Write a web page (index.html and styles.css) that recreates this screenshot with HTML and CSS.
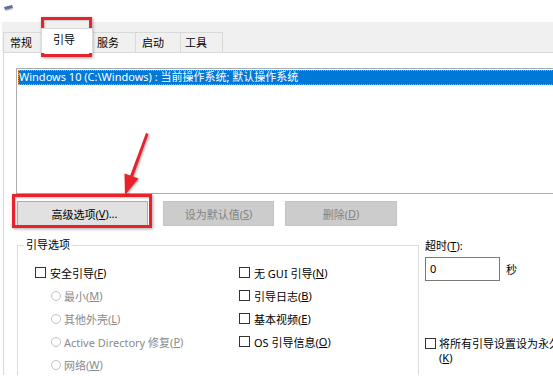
FILE: index.html
```html
<!DOCTYPE html>
<html lang="zh-CN">
<head>
<meta charset="utf-8">
<title>系统配置</title>
<link rel="stylesheet" href="styles.css">
</head>
<body>
<div class="titlebar">
  <svg class="app-icon" width="10" height="7" viewBox="0 0 10 7"><polygon points="0,2 8,0 9,3 1,5" fill="#5d7290"/><polygon points="1,5 9,3 9,4 2,6" fill="#a9b6c8"/></svg>
</div>
<div class="tabstrip">
  <div class="tab">常规</div>
  <div class="tab active">引导</div>
  <div class="tab">服务</div>
  <div class="tab">启动</div>
  <div class="tab">工具</div>
</div>
<div class="panel">
  <div class="listbox">
    <div class="item">Windows 10 (C:\Windows) : 当前操作系统; 默认操作系统</div>
  </div>
  <div class="buttons">
    <div class="btn btn-advanced">高级选项(<u>V</u>)...</div>
    <div class="btn btn-default disabled">设为默认值(<u>S</u>)</div>
    <div class="btn btn-delete disabled">删除(<u>D</u>)</div>
  </div>
  <div class="options">
    <fieldset class="group">
      <legend>引导选项</legend>
      <div class="group-body">
        <div class="col col-left">
          <div class="row"><span class="check"></span>安全引导(<u>F</u>)</div>
          <div class="row radio-row"><span class="radio"></span>最小(<u>M</u>)</div>
          <div class="row radio-row"><span class="radio"></span>其他外壳(<u>L</u>)</div>
          <div class="row radio-row"><span class="radio"></span>Active Directory 修复(<u>P</u>)</div>
          <div class="row radio-row"><span class="radio"></span>网络(<u>W</u>)</div>
        </div>
        <div class="col col-right">
          <div class="row"><span class="check"></span>无 GUI 引导(<u>N</u>)</div>
          <div class="row"><span class="check"></span>引导日志(<u>B</u>)</div>
          <div class="row"><span class="check"></span>基本视频(<u>E</u>)</div>
          <div class="row"><span class="check"></span>OS 引导信息(<u>O</u>)</div>
        </div>
      </div>
    </fieldset>
    <div class="timeout">
      <div class="timeout-label">超时(<u>T</u>):</div>
      <div class="timeout-field">
        <div class="input">0</div>
        <span class="unit">秒</span>
      </div>
      <div class="perm">
        <span class="check"></span>
        <span class="perm-text">将所有引导设置设为永久性(<u>K</u>)</span>
      </div>
    </div>
  </div>
</div>

<div class="hl hl-tab"></div>
<div class="hl hl-btn"></div>
<svg class="arrow" width="553" height="376" viewBox="0 0 553 376">
  <polygon points="146,133 148.5,134 133,177 130,176" fill="#e8212a"/>
  <polygon points="125,195 124.5,173.5 138.5,178.5" fill="#e8212a"/>
</svg>
</body>
</html>
```

FILE: styles.css
```css
* { box-sizing: border-box; }
html, body { margin: 0; padding: 0; }
body {
  width: 553px;
  height: 376px;
  overflow: hidden;
  position: relative;
  background: #fff;
  font-family: "Noto Sans", "Noto Sans CJK SC", sans-serif;
  font-size: 11px;
  color: #000;
}
u { text-decoration: underline; text-underline-offset: 1px; }

.titlebar { height: 22px; padding: 5px 0 0 4px; }
.app-icon { display: block; }

.tabstrip {
  height: 30px;
  margin-left: 2px;
  padding-left: 1px;
  background: #f0f0f0;
  display: flex;
  align-items: flex-end;
}
.tab {
  height: 20px;
  line-height: 19px;
  border: 1px solid #d9d9d9;
  border-bottom: none;
  background: #f0f0f0;
  margin-right: -1px;
  white-space: nowrap;
}
.tab:nth-child(1) { width: 39px; padding-left: 6px; }
.tab:nth-child(2) { width: 52px; padding-left: 11px; }
.tab:nth-child(3) { width: 44px; padding-left: 4px; }
.tab:nth-child(4) { width: 46px; padding-left: 6px; }
.tab:nth-child(5) { width: 43px; padding-left: 4px; }
.tab.active {
  height: 25px;
  line-height: 21px;
  background: #fff;
  margin-bottom: -1px;
  position: relative;
  z-index: 1;
}

.panel {
  margin-left: 3px;
  height: 323px;
  border-left: 1px solid #d9d9d9;
  border-top: 1px solid #d9d9d9;
  background: #fff;
  overflow: hidden;
}

.listbox {
  margin: 15px 0 0 12px;
  width: 560px;
  height: 126px;
  border: 1px solid #abadb3;
  padding: 1px;
}
.item {
  height: 15px;
  line-height: 14px;
  padding-left: 1px;
  background: #0078d7;
  color: #fff;
  white-space: nowrap;
  outline: 1px dotted #f39c4a;
  outline-offset: -1px;
}

.buttons {
  display: flex;
  margin: 7px 0 0 13px;
}
.btn {
  flex: none;
  height: 25px;
  border: 1px solid #adadad;
  background: #e1e1e1;
  display: flex;
  align-items: center;
  justify-content: center;
  white-space: nowrap;
}
.btn-advanced { width: 131px; margin-right: 15px; padding-left: 4px; }
.btn-default { width: 111px; margin-right: 11px; }
.btn-delete { width: 112px; }
.btn.disabled { background: #cccccc; border-color: #c4c4c4; color: #838383; }

.options {
  display: flex;
  margin: 11px 0 0 13px;
  width: 600px;
}
.group {
  flex: none;
  width: 402px;
  min-width: 0;
  height: 139px;
  margin: 0;
  padding: 0;
  border: 1px solid #dcdcdc;
  border-bottom: none;
  overflow: hidden;
}
.group legend {
  margin-left: 6px;
  padding: 0 2px;
  line-height: 16px;
}
.group-body {
  display: flex;
  padding: 8px 0 0 17px;
}
.col-left { flex: none; width: 204px; }
.row {
  height: 23px;
  display: flex;
  align-items: center;
  white-space: nowrap;
}
.check {
  flex: none;
  width: 11px;
  height: 11px;
  border: 1px solid #333;
  margin-right: 4px;
  background: #fff;
}
.radio-row { padding-left: 16px; color: #8a8a8a; }
.radio {
  flex: none;
  width: 10px;
  height: 10px;
  border: 1px solid #c3c3c3;
  border-radius: 50%;
  margin-right: 3px;
}

.timeout {
  flex: none;
  margin-left: 6px;
  display: flex;
  flex-direction: column;
  padding-top: 1px;
}
.timeout-label { line-height: 16px; }
.timeout-field {
  display: flex;
  align-items: center;
  margin-top: 3px;
}
.input {
  width: 75px;
  height: 24px;
  border: 1px solid #7a7a7a;
  padding-left: 4px;
  line-height: 21px;
}
.unit { margin-left: 6px; }
.perm {
  display: flex;
  align-items: flex-start;
  margin-top: 56px;
  width: 160px;
}
.perm .check { margin-top: 1px; margin-right: 3px; }
.perm-text { width: 134px; line-height: 14px; }

.hl {
  position: absolute;
  border: 3px solid #e8232b;
  box-shadow: 1px 1px 3px rgba(0, 0, 0, 0.35), inset 1px 1px 2px rgba(0, 0, 0, 0.25);
}
.hl-tab { left: 41px; top: 17px; width: 51px; height: 40px; }
.hl-btn { left: 12px; top: 194px; width: 140px; height: 34px; }
.arrow {
  position: absolute;
  left: 0;
  top: 0;
  pointer-events: none;
  filter: drop-shadow(1px 1px 1px rgba(0, 0, 0, 0.35));
}
```
